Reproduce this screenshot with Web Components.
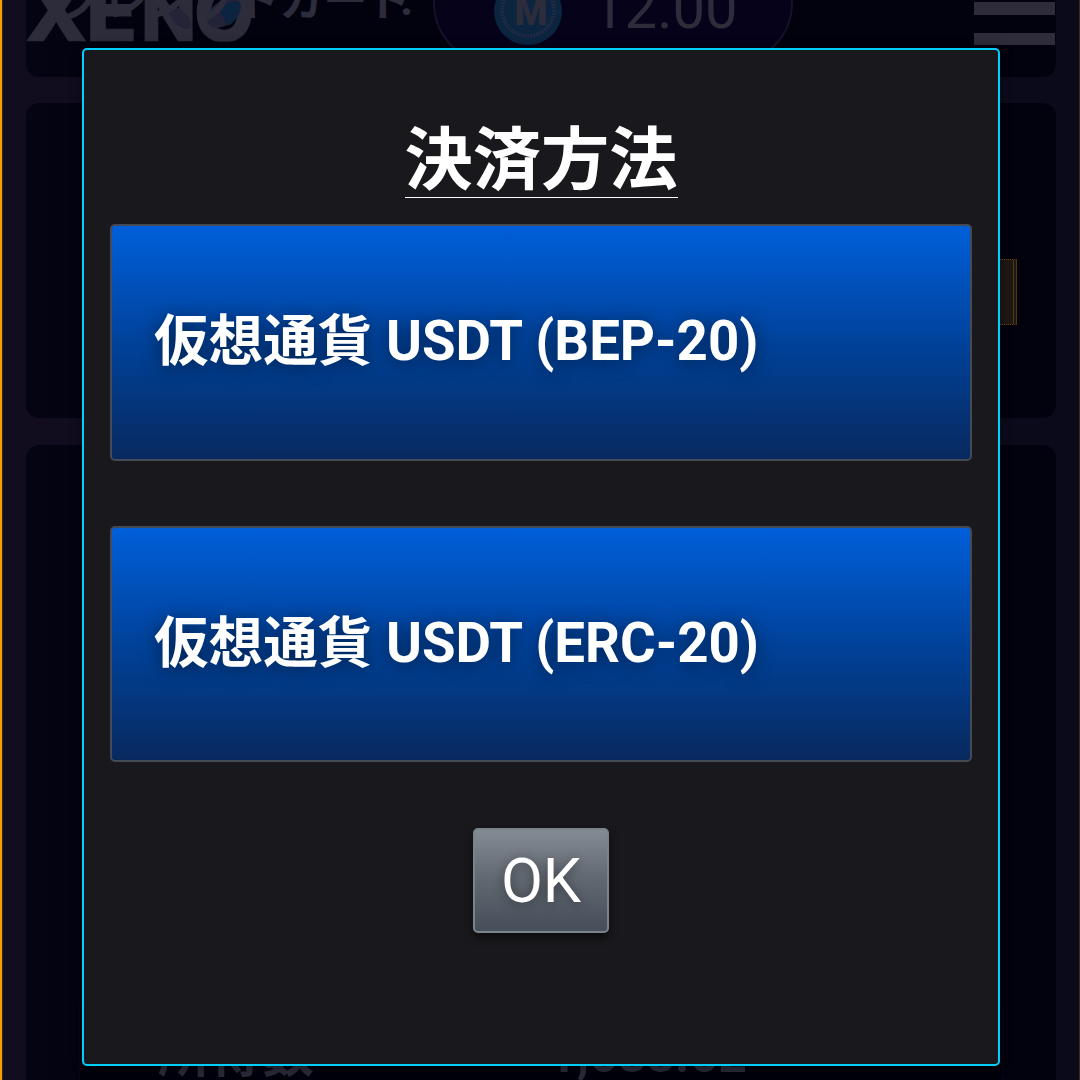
<!DOCTYPE html>
<html lang="ja">
<head>
<meta charset="utf-8">
<title>決済方法</title>
<style>
html,body{margin:0;padding:0;background:#03030f}
body{width:1080px;height:1080px;overflow:hidden;font-family:Roboto,"Noto Sans CJK JP",sans-serif}
</style>
</head>
<body>
<wallet-page>
  <page-card kind="top"></page-card>
  <page-card kind="middle"><gold-button></gold-button></page-card>
  <page-card kind="bottom"><balance-row label="所得数">1,688.62</balance-row></page-card>
  <top-bar slot="header" label="クレジットカード" amount="12.00"></top-bar>
  <payment-dialog slot="dialog">
    <span slot="title">決済方法</span>
    <payment-option>仮想通貨 USDT (BEP-20)</payment-option>
    <payment-option>仮想通貨 USDT (ERC-20)</payment-option>
    <ok-button slot="action">OK</ok-button>
  </payment-dialog>
</wallet-page>
<script>
const define=(name,html)=>customElements.define(name,class extends HTMLElement{
  constructor(){
    super();
    this.attachShadow({mode:'open'});
    const t=document.createElement('template');
    t.innerHTML=html;
    this.shadowRoot.append(t.content.cloneNode(true));
  }
  connectedCallback(){
    this.shadowRoot.querySelectorAll('[data-attr]').forEach(n=>n.textContent=this.getAttribute(n.dataset.attr)||'');
  }
});

define('wallet-page',`<style>
:host{display:block;position:relative;width:1080px;height:1080px;overflow:hidden;box-sizing:border-box;border-left:2px solid #f0a000;border-right:1px solid #3b2a1c;background:linear-gradient(90deg,#110c1e,#0a0a1b)}
main{display:flex;flex-direction:column;gap:26px;height:100%;padding:0 23px 0 24px;box-sizing:border-box;box-shadow:inset 1px 0 #33240f}
</style><main><slot></slot></main><slot name="header"></slot><slot name="dialog"></slot>`);

define('page-card',`<style>
:host{display:flex;flex-direction:column;flex:none;box-sizing:border-box;border-radius:13px;background:linear-gradient(90deg,#040412,#02020f 12%,#02020f)}
:host([kind=top]){height:77px;border-radius:0 0 13px 13px}
:host([kind=middle]){height:315px;margin-bottom:1px;padding:156px 39px 0 0;align-items:flex-end}
:host([kind=bottom]){flex:1;border-radius:13px 13px 0 0;justify-content:flex-end;padding:0 53px}
</style><slot></slot>`);

define('gold-button',`<style>
:host{display:block;box-sizing:border-box;width:140px;height:66px;background:#1f1814;border:1px dotted #6b4310;border-right:4px double #51370f}
</style>`);

define('balance-row',`<style>
:host{display:flex;height:76px;background:#01010c;color:#292837;border:1px solid #060619;border-bottom:0;box-sizing:border-box;font-weight:700;font-size:52px;line-height:60px;white-space:nowrap}
.l{padding-left:78px;width:468px;box-sizing:border-box;padding-top:20px}.v{padding-top:20px;font-size:50px}
</style><div class="l" data-attr="label"></div><div class="v"><slot></slot></div>`);

define('top-bar',`<style>
:host{display:block;position:absolute;left:-2px;top:0;width:1080px;height:60px;overflow:hidden;color:#2d2c3a}
svg{position:absolute;inset:0}
</style><svg width="1080" height="60" viewBox="0 0 1080 60">
<defs><clipPath id="cut"><rect x="0" y="0" width="300" height="41.5"/></clipPath></defs>
<g clip-path="url(#cut)"><text y="41" font-family="Inter" font-weight="800" font-size="72" fill="#2d2c3a" stroke="#2d2c3a" stroke-width="1"><tspan x="25" font-size="82">X</tspan><tspan x="86" font-size="84">E</tspan><tspan x="141">N</tspan><tspan x="194" font-size="78">O</tspan></text>
<ellipse cx="180" cy="18" rx="14" ry="7" transform="rotate(45 180 18)" fill="#242337"/>
<ellipse cx="224" cy="13" rx="19" ry="12" transform="rotate(-35 224 13)" fill="#222338"/>
<path d="M219 10Q225 2 236 1Q243 2 239 13Q235 22 228 26Z" fill="#0c2440"/></g>
<g font-weight="700" fill="#2d2c3a"><text data-attr="label" x="58" y="16" font-size="44.2"></text><text x="400" y="15" font-size="46">:</text></g>
<rect x="434" y="-64" width="358" height="127" rx="60" fill="#05021a" stroke="#17112a" stroke-width="2"/>
<circle cx="528" cy="11" r="34" fill="#0b2440"/><circle cx="528" cy="10" r="26" fill="none" stroke="#202b43" stroke-width="4" stroke-dasharray="2 1"/>
<text x="531" y="25" text-anchor="middle" font-size="38" font-weight="900" fill="#2d2c3a">M</text>
<text data-attr="amount" x="592" y="28" font-size="58" fill="#2d2c3a"></text>
<path d="M974 2h81v13h-81zM974 33h81v12h-81z" fill="#2e2c3a"/>
</svg>`);

define('payment-dialog',`<style>
:host{display:flex;flex-direction:column;align-items:center;position:absolute;left:80px;top:48px;width:918px;height:1018px;box-sizing:border-box;border:2px solid #00cfff;border-radius:5px;background:#19181c;padding:70px 26px 0;color:#fff;box-shadow:0 0 12px #0006}
h2{margin:0;height:77px;line-height:83px;font-size:68.25px;font-weight:700;border-bottom:1px solid #fff;white-space:nowrap}
.list{display:flex;flex-direction:column;gap:65px;align-self:stretch;margin-top:26px}
.action{margin-top:66px}
</style><h2><slot name="title"></slot></h2><div class="list"><slot></slot></div><div class="action"><slot name="action"></slot></div>`);

define('payment-option',`<style>
:host{display:flex;align-items:center;height:237px;box-sizing:border-box;border:2px solid #444a55;border-radius:5px;padding:0 0 13px 42px;background:linear-gradient(#005fda,#00429a 50%,#08295f);font-size:54.6px;font-weight:700;white-space:nowrap;text-shadow:0 2px 18px #0008}
:host(:last-of-type){height:236px;padding-bottom:12px}
</style><span><slot></slot></span>`);

define('ok-button',`<style>
:host{display:flex;align-items:center;justify-content:center;width:136px;height:105px;box-sizing:border-box;border:2px solid #7b848d;border-radius:5px;background:linear-gradient(#858b93,#606770 50%,#454e59);font-size:61px;box-shadow:0 4px 8px #0009;text-shadow:0 2px 12px #0006}
</style><slot></slot>`);
</script>
</body>
</html>
